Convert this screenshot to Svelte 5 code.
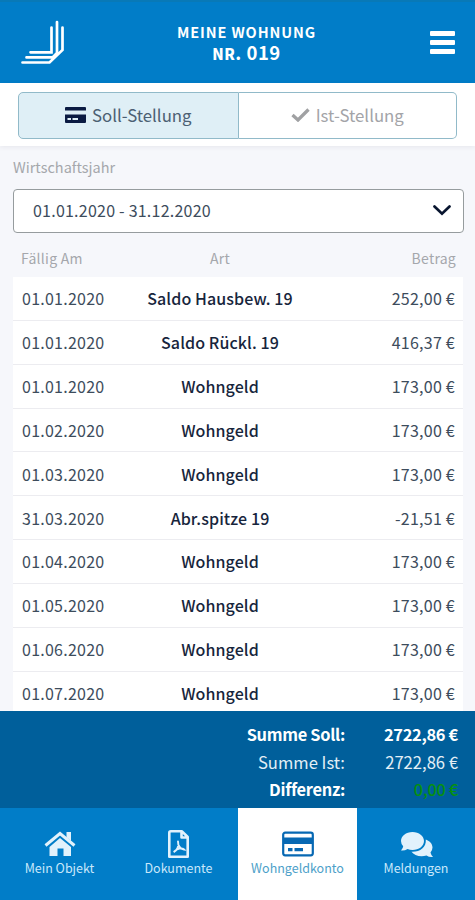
<script lang="ts">
  const entries = [
    { due: "01.01.2020", kind: "Saldo Hausbew. 19", amount: "252,00 €" },
    { due: "01.01.2020", kind: "Saldo Rückl. 19", amount: "416,37 €" },
    { due: "01.01.2020", kind: "Wohngeld", amount: "173,00 €" },
    { due: "01.02.2020", kind: "Wohngeld", amount: "173,00 €" },
    { due: "01.03.2020", kind: "Wohngeld", amount: "173,00 €" },
    { due: "31.03.2020", kind: "Abr.spitze 19", amount: "-21,51 €" },
    { due: "01.04.2020", kind: "Wohngeld", amount: "173,00 €" },
    { due: "01.05.2020", kind: "Wohngeld", amount: "173,00 €" },
    { due: "01.06.2020", kind: "Wohngeld", amount: "173,00 €" },
    { due: "01.07.2020", kind: "Wohngeld", amount: "173,00 €" },
  ];
</script>

<div class="app">
  <header>
    <svg class="logo" width="45" height="45" viewBox="0 0 45 45">
      <path d="M31.500 7.500V32.300H10.500M37 2V33L32.500 37.400H6.500M42.500 7.500V30L29.500 42.500H2.500" />
    </svg>
    <h1>
      <span>MEINE WOHNUNG</span>
      <span class="unit"><b>NR</b>. 019</span>
    </h1>
    <button class="menu" aria-label="Menü"><i></i><i></i><i></i></button>
  </header>

  <div class="switch">
    <button class="active">
      <svg width="21" height="16" viewBox="0 0 21 16">
        <path fill="#0b1b42" d="M1 0h19q1 0 1 1v2.500H0V1Q0 0 1 0zM0 7.500h21V15q0 1-1 1H1q-1 0-1-1z" />
        <path fill="#dfeff6" d="M2.500 11H6v2H2.500zM7.500 11H13v2H7.500z" />
      </svg>
      Soll-Stellung
    </button>
    <button>
      <svg width="19" height="14" viewBox="0 0 19 14">
        <path d="M1.500 7L7 12L17.500 1.500" fill="none" stroke="#a0a1a3" stroke-width="3.300" />
      </svg>
      Ist-Stellung
    </button>
  </div>

  <main>
    <label for="year">Wirtschaftsjahr</label>
    <button id="year" class="select">
      <span>01.01.2020 - 31.12.2020</span>
      <svg width="18" height="11" viewBox="0 0 18 11">
        <path d="M1.500 1.500L9 8.700L16.500 1.500" fill="none" stroke="#08152f" stroke-width="2.700" stroke-linecap="round" />
      </svg>
    </button>

    <div class="row head">
      <span>Fällig Am</span>
      <span>Art</span>
      <span>Betrag</span>
    </div>
    <div class="list">
      {#each entries as entry}
        <div class="row">
          <span>{entry.due}</span>
          <strong>{entry.kind}</strong>
          <span>{entry.amount}</span>
        </div>
      {/each}
    </div>
  </main>

  <section class="totals">
    <div class="bold"><span class="name">Summe Soll:</span><span>2722,86 €</span></div>
    <div><span class="name">Summe Ist:</span><span>2722,86 €</span></div>
    <div class="bold"><span class="name">Differenz:</span><span class="ok">0,00 €</span></div>
  </section>

  <nav>
    <button>
      <svg width="32" height="28" viewBox="0 0 32 28">
        <path fill="none" stroke="#e2f2fc" stroke-width="3" d="M1.500 15.500L16 3.500L30.500 15.500" />
        <path fill="#e2f2fc" d="M22.500 2H27v9l-4.500-3.700zM16 8l11 9v9h-7.500v-7.500h-6V26H5.500v-9z" />
      </svg>
      <span>Mein Objekt</span>
    </button>
    <button>
      <svg width="22" height="28" viewBox="0 0 22 28">
        <path fill="none" stroke="#e2f2fc" stroke-width="2.600" stroke-linejoin="round" d="M2.800 1.300H14l5.700 5.700v19.700H1.300V2.800Q1.300 1.300 2.800 1.300zM13.500 1.300V7.500H19.700" />
        <path fill="none" stroke="#e2f2fc" stroke-width="1.900" stroke-linecap="round" d="M10 11.500C10 16 12 19 16 19.500C14 17.500 9 18.500 5.800 22C8.500 21 11.500 16 10 11.500" />
      </svg>
      <span>Dokumente</span>
    </button>
    <button class="current">
      <svg width="32" height="28" viewBox="0 0 32 28">
        <rect x="1.200" y="2.700" width="29.600" height="22.600" rx="2" fill="none" stroke="#0768b3" stroke-width="2.200" />
        <path fill="#0768b3" d="M1 7.500h30V14H1zM6 18h4.500v3.300H6zM12.500 18H21v3.300h-8.500z" />
      </svg>
      <span>Wohngeldkonto</span>
    </button>
    <button>
      <svg width="33" height="28" viewBox="0 0 33 28">
        <path fill="#e2f2fc" d="M12.500 2C19 2 24 6 24 11S19 20 12.500 20Q9.800 20 7.500 19Q4.500 21 1 20.500Q3 18.500 3.200 16.300Q1 14 1 11C1 6 6 2 12.500 2z" />
        <path fill="#e2f2fc" d="M25.800 9.500C30 11 32.500 14 32.500 17.500Q32.500 20 30.500 22.500Q31 25 33 27Q29 27.300 26.500 25.500C20.500 27.500 14 25.500 11.500 21.800C19.500 22.300 26.500 17.500 25.800 9.500z" />
      </svg>
      <span>Meldungen</span>
    </button>
  </nav>
</div>

<style>
  :global(body) {
    margin: 0;
  }

  .app {
    display: flex;
    flex-direction: column;
    height: 900px;
    overflow: hidden;
    background: #f6f7fb;
    color: #3d4c5c;
    font-family: "Noto Sans CJK SC", "Noto Sans", sans-serif;
    font-size: 16px;
    line-height: 24px;
  }

  button {
    padding: 0;
    border: 0;
    background: none;
    color: inherit;
    font: inherit;
  }

  header {
    display: flex;
    justify-content: space-between;
    align-items: flex-start;
    flex: none;
    box-sizing: border-box;
    height: 83px;
    padding: 20px 20px 0;
    background: #017dc8;
    border-top: 2px solid #0879b7;
    color: #fff;
  }

  .logo {
    margin-top: -2px;
    fill: none;
    stroke: #fff;
    stroke-width: 2.7;
    stroke-linecap: round;
  }

  h1 {
    display: flex;
    flex-direction: column;
    align-items: center;
    margin: 0 0 0 18px;
    font-size: 14.5px;
    line-height: 20px;
    letter-spacing: 0.9px;
  }

  .unit {
    font-size: 18.5px;
    letter-spacing: 0.5px;
  }

  .unit b {
    font-size: 15px;
  }

  .menu {
    display: flex;
    flex-direction: column;
    gap: 4px;
    width: 25px;
    margin: 9px 0 0 20px;
  }

  .menu i {
    height: 5px;
    border-radius: 1px;
    background: #fff;
  }

  .switch {
    display: flex;
    flex: none;
    box-sizing: border-box;
    height: 63px;
    padding: 9px 18px 7px;
    background: #fff;
    box-shadow: 0 1px 5px rgba(40, 40, 60, 0.08);
  }

  .switch button {
    display: flex;
    align-items: center;
    justify-content: center;
    gap: 6px;
    width: 219px;
    box-sizing: border-box;
    padding-bottom: 1px;
    border: 1px solid #91bac9;
    border-left: 0;
    border-radius: 0 5px 5px 0;
    color: #a3a4a8;
    font-size: 16.8px;
  }

  .switch .active {
    width: 221px;
    border-left: 1px solid #91bac9;
    border-radius: 5px 0 0 5px;
    background: #dfeff6;
    color: #4c6073;
  }

  main {
    flex: 1;
    min-height: 0;
    overflow: hidden;
    padding: 9px 11px 0 13px;
  }

  label {
    display: block;
    color: #a5a7ac;
    font-size: 14.5px;
  }

  .select {
    display: flex;
    align-items: center;
    justify-content: space-between;
    box-sizing: border-box;
    width: 100%;
    height: 44px;
    margin-top: 10px;
    padding: 0 12px 2px 19px;
    border: 1px solid #969c9e;
    border-radius: 4px;
    background: #fff;
    letter-spacing: 0.23px;
  }

  .row {
    display: grid;
    grid-template-columns: 110px 1fr 110px;
    align-items: center;
    box-sizing: border-box;
    height: 43.85px;
    padding: 0 8px 0 9px;
    border-bottom: 1px solid #ececf0;
    letter-spacing: 0.25px;
  }

  .row > :nth-child(2) {
    margin-right: 36px;
    margin-left: -1px;
    text-align: center;
    white-space: nowrap;
  }

  .row > :last-child {
    text-align: right;
  }

  .row strong {
    color: #17253c;
    font-weight: 500;
    letter-spacing: 0.1px;
  }

  .head {
    height: 44px;
    padding: 6px 8px 0;
    border: 0;
    color: #a5a7ac;
    font-size: 14px;
  }

  .list {
    margin-right: 1px;
    background: #fff;
  }

  .totals {
    flex: none;
    box-sizing: border-box;
    height: 97px;
    padding: 10px 17px 0 0;
    background: #005f9b;
    color: #e3eff6;
    font-size: 16.6px;
    line-height: 27.7px;
  }

  .totals div {
    display: flex;
    justify-content: flex-end;
    text-align: right;
  }

  .totals .name {
    width: 130px;
  }

  .totals span:last-child {
    width: 113px;
  }

  .totals .bold {
    color: #fff;
    font-weight: 700;
    font-size: 16.4px;
    letter-spacing: -0.3px;
  }

  .totals .ok {
    color: #079010;
    font-weight: 500;
  }

  nav {
    display: grid;
    grid-template-columns: 119px 119px 119px 118px;
    flex: none;
    height: 92px;
    background: #017dc8;
    color: #c9e8fb;
    font-size: 12.5px;
    line-height: 20px;
  }

  nav button {
    display: flex;
    flex-direction: column;
    align-items: center;
    padding-top: 22px;
  }

  nav .current {
    background: #fff;
    color: #4d9fc9;
  }
</style>
